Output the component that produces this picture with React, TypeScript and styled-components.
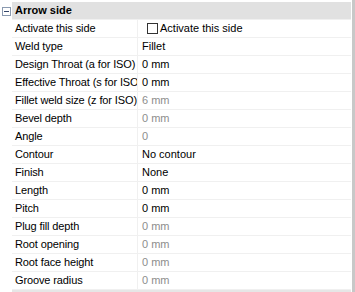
import React from "react";
import styled, { createGlobalStyle } from "styled-components";

const GlobalStyle = createGlobalStyle`
  html, body {
    margin: 0;
    padding: 0;
    background: #fff;
  }
  body {
    font-family: "Liberation Sans", Arial, sans-serif;
    font-size: 11px;
  }
`;

const Frame = styled.div`
  display: flex;
  width: 355px;
  height: 292px;
  overflow: hidden;
  background: #fff;
`;

const Grid = styled.div`
  flex: 1;
  display: flex;
  flex-direction: column;
`;

const ScrollEdge = styled.div`
  width: 3px;
  margin-left: 1px;
  background: #c8c8c8;
`;

const Category = styled.div`
  display: flex;
  height: 18px;
  margin-top: 2px;
`;

const Toggle = styled.div`
  width: 12px;
  display: flex;
  justify-content: center;
  padding-top: 5px;
  box-sizing: border-box;
`;

const CategoryTitle = styled.div`
  flex: 1;
  background: #e1e1e1;
  border-bottom: 1px solid #f0f0f0;
  font-weight: bold;
  color: #000;
  padding-left: 3px;
  line-height: 17px;
`;

const Row = styled.div`
  display: flex;
  height: 18px;
  margin-left: 12px;
  border-bottom: 1px solid #f0f0f0;
  box-sizing: border-box;
`;

const Label = styled.div`
  width: 126px;
  box-sizing: border-box;
  padding-left: 3px;
  border-right: 1px solid #f0f0f0;
  white-space: nowrap;
  overflow: hidden;
  line-height: 17px;
  letter-spacing: -0.12px;
  color: #000;
`;

const Value = styled.div<{ $muted?: boolean }>`
  flex: 1;
  padding-left: 4px;
  line-height: 17px;
  white-space: nowrap;
  color: ${(p) => (p.$muted ? "#8d8d8d" : "#000")};
  display: flex;
  align-items: center;
`;

const Box = styled.span`
  width: 11px;
  height: 11px;
  border: 1px solid #333;
  box-sizing: border-box;
  margin: 0 2px 0 5px;
`;

const Footer = styled.div`
  margin-left: 12px;
  margin-top: auto;
  height: 2px;
  background: #e6e6e6;
`;

type Prop = { label: string; value: string; muted?: boolean; check?: boolean };

const rows: Prop[] = [
  { label: "Activate this side", value: "Activate this side", check: true },
  { label: "Weld type", value: "Fillet" },
  { label: "Design Throat (a for ISO)", value: "0 mm" },
  { label: "Effective Throat (s for ISO)", value: "0 mm" },
  { label: "Fillet weld size (z for ISO)", value: "6 mm", muted: true },
  { label: "Bevel depth", value: "0 mm", muted: true },
  { label: "Angle", value: "0", muted: true },
  { label: "Contour", value: "No contour" },
  { label: "Finish", value: "None" },
  { label: "Length", value: "0 mm" },
  { label: "Pitch", value: "0 mm" },
  { label: "Plug fill depth", value: "0 mm", muted: true },
  { label: "Root opening", value: "0 mm", muted: true },
  { label: "Root face height", value: "0 mm", muted: true },
  { label: "Groove radius", value: "0 mm", muted: true },
];

const Minus = () => (
  <svg width="9" height="9" viewBox="0 0 9 9">
    <rect x="0.5" y="0.5" width="8" height="8" fill="#fff" stroke="#8a9ab0" />
    <path d="M2 4.5h5" stroke="#34466a" />
  </svg>
);

export default function App() {
  return (
    <Frame>
      <GlobalStyle />
      <Grid>
        <Category>
          <Toggle>
            <Minus />
          </Toggle>
          <CategoryTitle>Arrow side</CategoryTitle>
        </Category>
        {rows.map((r) => (
          <Row key={r.label}>
            <Label>{r.label}</Label>
            {r.check ? (
              <Value>
                <Box />
                {r.value}
              </Value>
            ) : (
              <Value $muted={r.muted}>{r.value}</Value>
            )}
          </Row>
        ))}
        <Footer />
      </Grid>
      <ScrollEdge />
    </Frame>
  );
}
